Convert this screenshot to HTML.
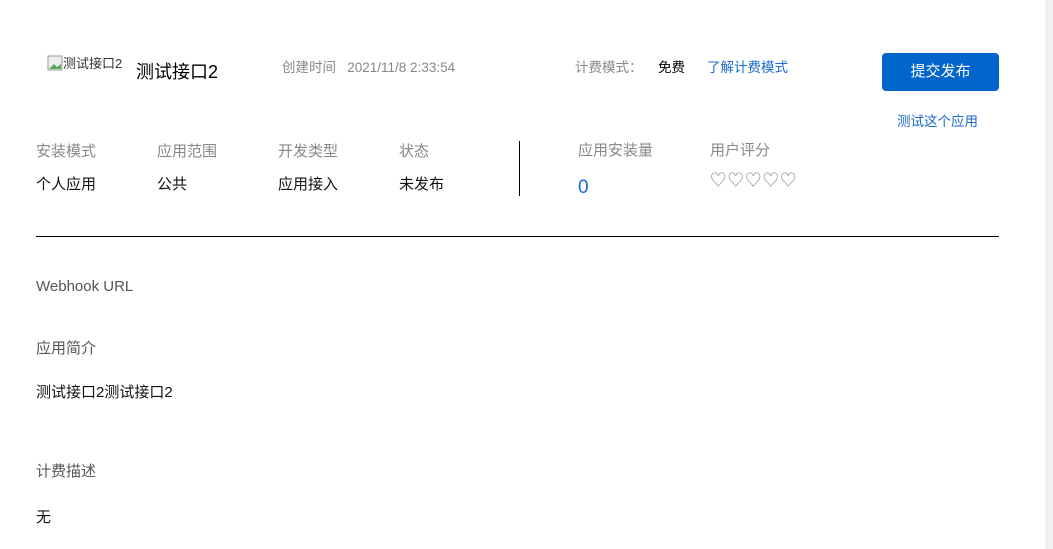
<!DOCTYPE html>
<html><head><meta charset="utf-8"><style>
body{margin:0;width:1053px;height:549px;overflow:hidden;background:#fff;font-family:"Liberation Sans","Noto Sans CJK SC",sans-serif;position:relative}
.a{position:absolute;white-space:nowrap;line-height:1}
.g{color:#888;font-size:15px}
.v{color:#111;font-size:15px}
.s{color:#555;font-size:15px}
</style></head><body>
<div class="a" style="left:47px;top:55px;font-size:13px;color:#333">
<svg width="16" height="16" style="vertical-align:-3px"><rect x="1" y="1" width="14" height="14" fill="#eee" stroke="#999"/><path d="M2 14 L7 9 L10 12 L14 9 L14 14Z" fill="#5a5"/></svg>测试接口2</div>
<div class="a" style="left:136px;top:63px;font-size:18px;color:#000">测试接口2</div>
<div class="a" style="left:282px;top:61px;font-size:13.5px;color:#888">创建时间&nbsp;&nbsp;&nbsp;2021/11/8 2:33:54</div>
<div class="a" style="left:575px;top:61px;font-size:13.5px;color:#888">计费模式：</div>
<div class="a" style="left:658px;top:61px;font-size:13.5px;color:#000">免费</div>
<div class="a" style="left:707px;top:61px;font-size:13.5px;color:#1a6ad0">了解计费模式</div>
<div class="a" style="left:882px;top:53px;width:117px;height:38px;background:#0066cc;border-radius:4px;color:#fff;font-size:15px;line-height:38px;text-align:center">提交发布</div>
<div class="a" style="left:897px;top:115px;font-size:13.5px;color:#1a6ad0">测试这个应用</div>
<div class="a g" style="left:36px;top:144px">安装模式</div>
<div class="a g" style="left:157px;top:144px">应用范围</div>
<div class="a g" style="left:278px;top:144px">开发类型</div>
<div class="a g" style="left:399px;top:144px">状态</div>
<div class="a v" style="left:36px;top:177px">个人应用</div>
<div class="a v" style="left:157px;top:177px">公共</div>
<div class="a v" style="left:278px;top:177px">应用接入</div>
<div class="a v" style="left:399px;top:177px">未发布</div>
<div class="a" style="left:519px;top:141px;width:1px;height:55px;background:#000"></div>
<div class="a g" style="left:578px;top:143px">应用安装量</div>
<div class="a" style="left:578px;top:178px;font-size:19px;color:#1a6ad0">0</div>
<div class="a g" style="left:710px;top:143px">用户评分</div>
<div class="a" style="left:710px;top:173px;font-size:16.5px;color:#888;letter-spacing:1px">♡♡♡♡♡</div>
<div class="a" style="left:36px;top:236px;width:963px;height:1px;background:#000"></div>
<div class="a s" style="left:36px;top:279px">Webhook URL</div>
<div class="a s" style="left:36px;top:341px">应用简介</div>
<div class="a v" style="left:36px;top:385px">测试接口2测试接口2</div>
<div class="a s" style="left:36px;top:464px">计费描述</div>
<div class="a v" style="left:36px;top:510px">无</div>
<div class="a" style="left:1045px;top:0;width:8px;height:549px;background:#f1f1f1"></div>
</body></html>
